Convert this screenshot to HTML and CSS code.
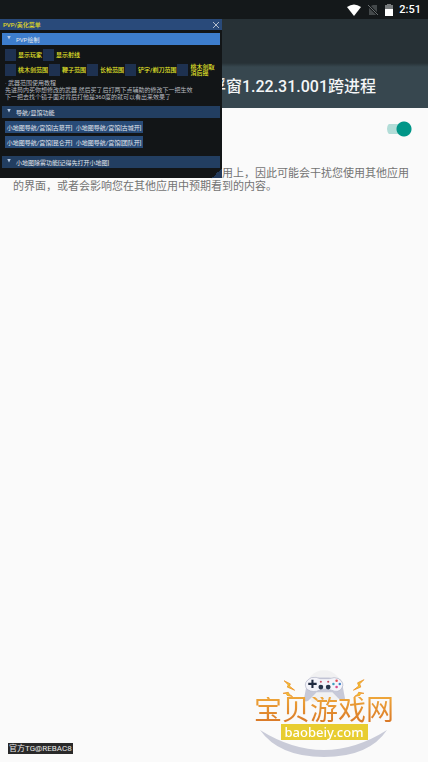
FILE: index.html
```html
<!DOCTYPE html>
<html lang="zh-CN">
<head>
<meta charset="utf-8">
<meta name="viewport" content="width=device-width, initial-scale=1">
<title>悬浮窗设置</title>
<link rel="stylesheet" href="styles.css">
</head>
<body>
<div class="status">
  <svg width="14" height="12" viewBox="0 0 14 12"><path d="M0 3Q7-2 14 3L7 12Z" fill="#fff"/></svg>
  <svg width="12" height="12" viewBox="0 0 12 12"><path d="M4 2L6 1H10V11H2V4Z" fill="#44494b"/><path d="M1 1L11 11" stroke="#14181a" stroke-width="2.5"/><path d="M1 1L11 11" stroke="#6a6f71" stroke-width="1"/></svg>
  <svg width="8" height="12" viewBox="0 0 8 12"><path d="M2 0H6V1H8V5H0V1H2Z" fill="#777b7d"/><path d="M0 5H8V12H0Z" fill="#fff"/></svg>
  <time>2:51</time>
</div>
<header class="appbar"><h1>浮窗1.22.31.001跨进程</h1></header>
<main class="settings">
  <div class="permission"><input type="checkbox" class="switch" role="switch" aria-label="允许显示在其他应用上" checked></div>
  <p class="description">此权限可让应用显示在您正在使用的其他应用上，因此可能会干扰您使用其他应用的界面，或者会影响您在其他应用中预期看到的内容。</p>
</main>

<section class="panel">
  <div class="panel-title"><span>PVP/美化菜单</span>
    <button class="close" aria-label="关闭"><svg width="8" height="8" viewBox="0 0 8 8"><path d="M1 1L7 7M7 1L1 7" stroke="#d5dae2" stroke-width=".8"/></svg></button>
  </div>
  <div class="panel-body">
    <button class="section active"><i class="arrow"></i>PVP绘制</button>
    <div class="checks first">
      <label><input type="checkbox"><span>显示玩家</span></label>
      <label><input type="checkbox"><span>显示射线</span></label>
    </div>
    <div class="checks">
      <label><input type="checkbox"><span>桃木剑范围</span></label>
      <label><input type="checkbox"><span>鞭子范围</span></label>
      <label><input type="checkbox"><span>长枪范围</span></label>
      <label><input type="checkbox"><span>铲字/剃刀范围</span></label>
      <label><input type="checkbox"><span>桃木剑取<br>消后摇</span></label>
    </div>
    <div class="notes">
      <p>· 武器范围使用教程</p>
      <p>先进局内买你想修改的武器 然后买了后打两下点辅助的修改下一把生效</p>
      <p>下一把去找个镜子面对背后打他是360度的就可以看出来效果了</p>
    </div>
    <button class="section"><i class="arrow"></i>导航/显馆功能</button>
    <div class="actions">
      <button>小地图导航/宫馆[古墓开]</button>
      <button>小地图导航/宫馆[古城开]</button>
      <button>小地图导航/宫馆[昆仑开]</button>
      <button>小地图导航/宫馆[团队开]</button>
    </div>
    <button class="section"><i class="arrow"></i>小地图除雾功能[记得先打开小地图]</button>
  </div>
</section>

<div class="credit">官方TG@REBAC8</div>
<a class="brand" href="#">
  <svg class="pad" width="84" height="32" viewBox="0 0 80 30">
    <circle cx="40" cy="17" r="17" fill="#f1f1f2"/>
    <path d="M24 11Q25 7 30 8L35 7H45L50 8Q56 7 57 11L60 27Q60 30 56 29L48 21H33L25 29Q21 31 21 27Z" fill="#c7c9d8"/>
    <path d="M28 7Q33 6 36 8H45Q50 6 54 8Q60 12 57 17Q54 22 47 19L43 18H38L33 20Q26 21 23 17Q20 11 28 7Z" fill="#f4f4fa" stroke="#b7bacb" stroke-width=".7"/>
    <path d="M28 9H30V12H33V14H30V17H28V14H25V12H28Z" fill="#202b40"/>
    <circle cx="37" cy="16" r="2.3" fill="#29354b"/><circle cx="44" cy="16" r="2.3" fill="#29354b"/>
    <circle cx="37" cy="11" r="1" fill="#c54f65"/><circle cx="44" cy="11" r="1" fill="#c54f65"/>
    <circle cx="52" cy="10" r="1.2" fill="#e34c55"/><circle cx="55" cy="13" r="1.2" fill="#397fc8"/><circle cx="52" cy="16" r="1.2" fill="#d64b8f"/><circle cx="49" cy="13" r="1.2" fill="#3c9ebd"/>
    <path d="M2 10L8 13L7 15L12 19L5 16L6 14ZM1 22L6 21L7 23L10 25L5 24L4 22ZM78 9L72 12L73 15L68 19L75 16L74 13ZM78 22L73 21L72 23L69 25L74 24L75 22Z" fill="#f0c52d" stroke="#ec922b" stroke-width=".8"/>
  </svg>
  <strong>宝贝游戏网</strong>
  <span class="domain">baobeiy.com</span>
  <svg class="smile" width="130" height="28" viewBox="0 0 130 28"><path d="M1 0Q65 40 128 0Q110 27 65 27Q20 27 1 0Z" fill="#c9cbd8"/></svg>
</a>
</body>
</html>
```
FILE: styles.css
```css
* { box-sizing: border-box; }
body {
  margin: 0;
  min-height: 100vh;
  background: #fafafa;
  color: #737373;
  font-family: Roboto, "Noto Sans CJK SC", sans-serif;
}
button {
  margin: 0;
  padding: 0;
  border: 0;
  color: inherit;
  font: inherit;
}
h1, p { margin: 0; }
svg { display: block; }
.status {
  display: flex;
  height: 19px;
  align-items: center;
  justify-content: flex-end;
  gap: 6px;
  padding-right: 7px;
  background: #14181a;
  color: #fff;
}
.status time { font-size: 11px; font-weight: 500; line-height: 18px; }
.appbar {
  display: flex;
  height: 89px;
  align-items: flex-end;
  justify-content: flex-end;
  padding: 0 52px 9px 0;
  background: linear-gradient(#273136 0 44px, #37474f 48px);
  color: #f4f6f7;
}
.appbar h1 { font-size: 16px; font-weight: 500; line-height: 24px; }
.permission {
  display: flex;
  height: 59px;
  align-items: flex-start;
  justify-content: flex-end;
  padding: 13px 15px 0;
}
.switch {
  width: 26px;
  height: 16px;
  margin: 0;
  appearance: none;
  border-radius: 8px;
  background: radial-gradient(circle at 17px 8px, #009688 7px, transparent 8px), linear-gradient(#b2ddd8, #b2ddd8) 0 3px / 20px 10px no-repeat;
}
.description { padding: 0 13px; font-size: 11px; line-height: 13px; }
.panel {
  position: absolute;
  top: 19px;
  left: 0;
  width: 222px;
  background: linear-gradient(135deg, transparent 50%, #233a5b 50%) right bottom / 11px 9px no-repeat, #121517;
  color: #e6e9ee;
  font-size: 6px;
  line-height: 7px;
}
.panel-title {
  display: flex;
  height: 11px;
  align-items: center;
  justify-content: space-between;
  padding: 0 2px 0 3px;
  background: #294a7a;
  color: #e5dc24;
  font-weight: 500;
}
.close { background: transparent; }
.panel-body { padding: 3px 2px 10px; }
.section {
  display: flex;
  width: 100%;
  height: 12px;
  align-items: center;
  gap: 5px;
  padding: 0 5px;
  background: #223e61;
}
.section.active { background: #3d7dcc; }
.arrow {
  width: 4px;
  height: 4px;
  margin-bottom: 3px;
  background: #b7cbe6;
  clip-path: polygon(0 0, 100% 0, 50% 100%);
}
.checks {
  display: flex;
  height: 12px;
  gap: 1px;
  margin: 3px 3px 0;
  color: #e5e52a;
  font-weight: 500;
  line-height: 6px;
  white-space: nowrap;
}
.checks.first { margin-top: 4px; }
.checks label { display: flex; align-items: center; gap: 2px; }
.checks input {
  width: 11px;
  height: 12px;
  margin: 0;
  flex-shrink: 0;
  appearance: none;
  background: #1e3150;
}
.notes { padding: 3px 3px 6px; color: #b9bcc0; line-height: 7px; white-space: nowrap; }
.actions {
  display: grid;
  grid-template-columns: 69px 69px;
  gap: 3px 0;
  margin: 3px 3px 8px;
}
.actions button { height: 12px; background: #284b78; white-space: nowrap; }
.credit {
  position: fixed;
  bottom: 8px;
  left: 8px;
  padding: 0 1px;
  background: #292929;
  color: #e8e8e8;
  font-size: 8px;
  line-height: 11px;
}
.brand {
  position: fixed;
  right: 34px;
  bottom: 4px;
  display: flex;
  width: 140px;
  flex-direction: column;
  align-items: center;
  text-decoration: none;
}
.brand strong {
  margin-top: -5px;
  background: linear-gradient(#eea63a, #d87525);
  background-clip: text;
  color: transparent;
  font-size: 28px;
  font-weight: 400;
  line-height: 27px;
}
.domain {
  z-index: 1;
  padding: 0 4px;
  background: #e8cd31;
  color: #fff;
  font: 500 13px/16px "Noto Sans", sans-serif;
}
.smile { margin-top: -10px; }
```
